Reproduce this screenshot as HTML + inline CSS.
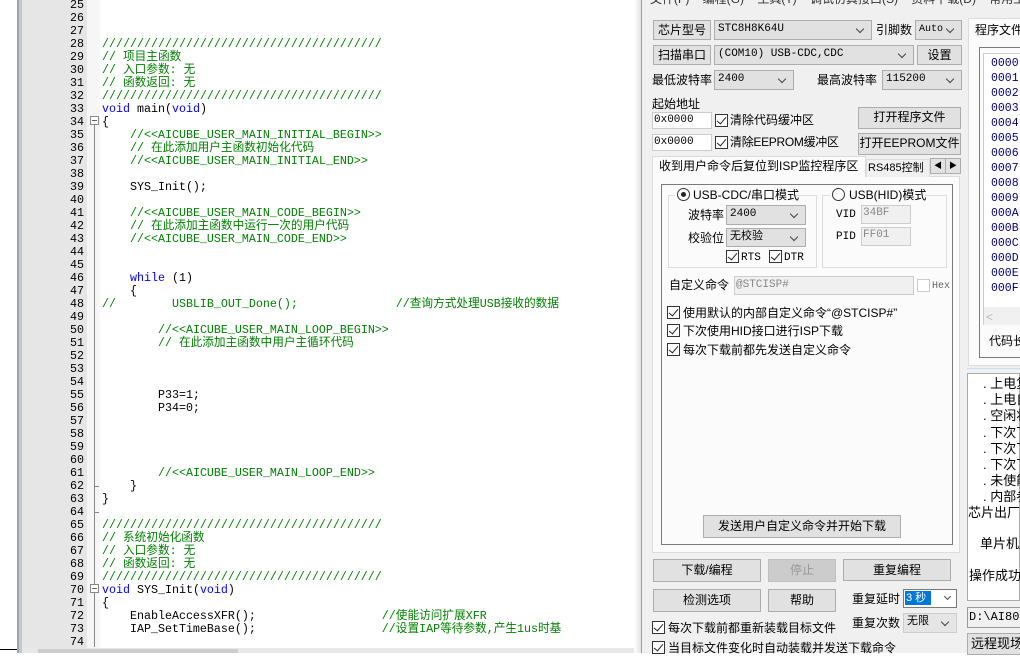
<!DOCTYPE html>
<html><head><meta charset="utf-8"><style>
*{margin:0;padding:0;box-sizing:border-box}
body{width:1020px;height:653px;overflow:hidden;background:#fff;position:relative;font-family:"Liberation Sans","Noto Sans CJK SC",sans-serif;font-size:12px;color:#000}
.a{position:absolute}
pre{font-family:"Liberation Mono","Noto Sans CJK SC",monospace;font-size:11.67px;line-height:13px;position:absolute;white-space:pre}
.c{color:#008000}.k{color:#0000ff}
.btn{position:absolute;background:#e1e1e1;border:1px solid #adadad;text-align:center;font-size:12px;line-height:19px;white-space:nowrap}
.cb{position:absolute;background:#e1e1e1;border:1px solid #adadad;font-size:11px;line-height:17px;padding-left:3px;font-family:"Liberation Mono","Noto Sans CJK SC",monospace}
.cb:after{content:"";position:absolute;right:8px;top:5px;width:5px;height:5px;border-right:1px solid #444;border-bottom:1px solid #444;transform:rotate(45deg)}
.in{position:absolute;background:#fff;border:1px solid #ccc;font-size:11px;line-height:15px;font-family:"Liberation Mono",monospace;padding-left:1px}
.ck{position:absolute;width:13px;height:13px;border:1px solid #333;background:#fff}
.ck:after{content:"";position:absolute;left:3px;top:0px;width:4px;height:8px;border-right:1.5px solid #222;border-bottom:1.5px solid #222;transform:rotate(40deg)}
.t{position:absolute;font-size:12px;white-space:nowrap;line-height:16px}
.m{font-family:"Liberation Mono","Noto Sans CJK SC",monospace;font-size:11px}
</style></head><body>
<div class="a" style="left:17px;top:0;width:2px;height:653px;background:#9aa6b8"></div>
<div class="a" style="left:19px;top:0;width:3px;height:653px;background:#c8c8c8"></div>
<div class="a" style="left:22px;top:0;width:65px;height:653px;background:#e6e6e6"></div>
<div class="a" style="left:87px;top:0;width:13px;height:653px;background:#f6f6f6"></div>
<div class="a" style="left:0;top:649px;width:17px;height:1px;background:#000"></div>
<div class="a" style="left:22px;top:648px;width:620px;height:5px;background:#e8e8e8"></div>
<div class="a" style="left:38px;top:649px;width:200px;height:4px;background:#cdcdcd"></div>
<pre style="left:40px;top:-1px;width:44px;text-align:right">25
26
27
28
29
30
31
32
33
34
35
36
37
38
39
40
41
42
43
44
45
46
47
48
49
50
51
52
53
54
55
56
57
58
59
60
61
62
63
64
65
66
67
68
69
70
71
72
73
74</pre>
<div class="a" style="left:90px;top:116px;width:9px;height:9px;border:1px solid #888;background:#fff"></div>
<div class="a" style="left:92px;top:120px;width:5px;height:1px;background:#666"></div>
<div class="a" style="left:94px;top:125px;width:1px;height:152px;background:#888"></div>
<div class="a" style="left:94px;top:277px;width:1px;height:370px;background:#888"></div>
<div class="a" style="left:94px;top:486px;width:5px;height:1px;background:#888"></div>
<div class="a" style="left:94px;top:512px;width:5px;height:1px;background:#888"></div>
<div class="a" style="left:90px;top:584px;width:9px;height:9px;border:1px solid #888;background:#fff"></div>
<div class="a" style="left:92px;top:588px;width:5px;height:1px;background:#666"></div>
<pre style="left:102px;top:-1px">



<span class="c">////////////////////////////////////////</span>
<span class="c">// 项目主函数</span>
<span class="c">// 入口参数: 无</span>
<span class="c">// 函数返回: 无</span>
<span class="c">////////////////////////////////////////</span>
<span class="k">void</span> main(<span class="k">void</span>)
{
    <span class="c">//&lt;&lt;AICUBE_USER_MAIN_INITIAL_BEGIN&gt;&gt;</span>
    <span class="c">// 在此添加用户主函数初始化代码</span>
    <span class="c">//&lt;&lt;AICUBE_USER_MAIN_INITIAL_END&gt;&gt;</span>

    SYS_Init();

    <span class="c">//&lt;&lt;AICUBE_USER_MAIN_CODE_BEGIN&gt;&gt;</span>
    <span class="c">// 在此添加主函数中运行一次的用户代码</span>
    <span class="c">//&lt;&lt;AICUBE_USER_MAIN_CODE_END&gt;&gt;</span>


    <span class="k">while</span> (1)
    {
<span class="c">//        USBLIB_OUT_Done();              //查询方式处理USB接收的数据</span>

        <span class="c">//&lt;&lt;AICUBE_USER_MAIN_LOOP_BEGIN&gt;&gt;</span>
        <span class="c">// 在此添加主函数中用户主循环代码</span>



        P33=1;
        P34=0;




        <span class="c">//&lt;&lt;AICUBE_USER_MAIN_LOOP_END&gt;&gt;</span>
    }
}

<span class="c">////////////////////////////////////////</span>
<span class="c">// 系统初始化函数</span>
<span class="c">// 入口参数: 无</span>
<span class="c">// 函数返回: 无</span>
<span class="c">////////////////////////////////////////</span>
<span class="k">void</span> SYS_Init(<span class="k">void</span>)
{
    EnableAccessXFR();                  <span class="c">//使能访问扩展XFR</span>
    IAP_SetTimeBase();                  <span class="c">//设置IAP等待参数,产生1us时基</span>
</pre>
<div class="a" style="left:634px;top:0;width:7px;height:653px;background:linear-gradient(90deg,#fff,#e4e4e4)"></div>
<div class="a" style="left:641px;top:0;width:1px;height:653px;background:#a0a0a0"></div>
<div class="a" style="left:642px;top:0;width:378px;height:653px;background:#f0f0f0"></div>
<div class="t" style="left:650px;top:-9px;color:#333">文件(F)&nbsp;&nbsp;&nbsp;&nbsp;编程(G)&nbsp;&nbsp;&nbsp;&nbsp;工具(T)&nbsp;&nbsp;&nbsp;&nbsp;调试仿真接口(S)&nbsp;&nbsp;&nbsp;&nbsp;资料下载(D)&nbsp;&nbsp;&nbsp;&nbsp;常用工</div>
<div class="btn" style="left:653px;top:20px;width:58px;height:20px">芯片型号</div>
<div class="cb" style="left:714px;top:20px;width:158px;height:20px">STC8H8K64U</div>
<div class="t" style="left:876px;top:22px">引脚数</div>
<div class="cb" style="left:915px;top:20px;width:47px;height:20px;font-size:10px">Auto</div>
<div class="btn" style="left:653px;top:45px;width:58px;height:20px">扫描串口</div>
<div class="cb" style="left:714px;top:45px;width:200px;height:20px">(COM10) USB-CDC,CDC</div>
<div class="btn" style="left:917px;top:45px;width:45px;height:20px">设置</div>
<div class="t" style="left:652px;top:72px">最低波特率</div>
<div class="cb" style="left:714px;top:70px;width:80px;height:20px">2400</div>
<div class="t" style="left:817px;top:72px">最高波特率</div>
<div class="cb" style="left:882px;top:70px;width:80px;height:20px">115200</div>
<div class="t" style="left:652px;top:96px">起始地址</div>
<div class="in" style="left:652px;top:112px;width:60px;height:17px">0x0000</div>
<div class="ck" style="left:715px;top:114px"></div>
<div class="t" style="left:730px;top:112px">清除代码缓冲区</div>
<div class="in" style="left:652px;top:134px;width:60px;height:17px">0x0000</div>
<div class="ck" style="left:715px;top:136px"></div>
<div class="t" style="left:730px;top:134px;letter-spacing:-0.3px">清除EEPROM缓冲区</div>
<div class="btn" style="left:858px;top:107px;width:103px;height:22px">打开程序文件</div>
<div class="btn" style="left:858px;top:133px;width:103px;height:22px">打开EEPROM文件</div>
<div class="a" style="left:652px;top:176px;width:308px;height:377px;background:#fbfbfb;border:1px solid #dcdcdc"></div>
<div class="a" style="left:652px;top:156px;width:214px;height:21px;background:#fbfbfb;border:1px solid #dcdcdc;border-bottom:none"></div>
<div class="t" style="left:659px;top:158px">收到用户命令后复位到ISP监控程序区</div>
<div class="a" style="left:866px;top:159px;width:64px;height:18px;background:#f0f0f0;border:1px solid #dcdcdc;border-bottom:none"></div>
<div class="t" style="left:868px;top:160px;font-size:11px">RS485控制</div>
<div class="btn" style="left:930px;top:158px;width:16px;height:16px;font-size:8px;line-height:14px">◀</div>
<div class="btn" style="left:945px;top:158px;width:16px;height:16px;font-size:8px;line-height:14px">▶</div>
<div class="a" style="left:661px;top:184px;width:292px;height:361px;border:1px solid #7a7a7a"></div>
<div class="a" style="left:668px;top:195px;width:149px;height:73px;border:1px solid #dcdcdc"></div>
<div class="a" style="left:822px;top:195px;width:125px;height:73px;border:1px solid #dcdcdc"></div>
<div class="a" style="left:675px;top:187px;width:118px;height:16px;background:#fbfbfb"></div>
<div class="a" style="left:677px;top:188px;width:13px;height:13px;border:1px solid #333;border-radius:50%;background:#fff"></div>
<div class="a" style="left:681px;top:192px;width:5px;height:5px;border-radius:50%;background:#222"></div>
<div class="t" style="left:693px;top:187px">USB-CDC/串口模式</div>
<div class="a" style="left:830px;top:187px;width:95px;height:16px;background:#fbfbfb"></div>
<div class="a" style="left:832px;top:188px;width:13px;height:13px;border:1px solid #333;border-radius:50%;background:#fff"></div>
<div class="t" style="left:849px;top:187px">USB(HID)模式</div>
<div class="t" style="left:688px;top:207px">波特率</div>
<div class="cb" style="left:726px;top:205px;width:80px;height:20px">2400</div>
<div class="t" style="left:688px;top:230px">校验位</div>
<div class="cb" style="left:726px;top:228px;width:80px;height:19px">无校验</div>
<div class="ck" style="left:726px;top:250px"></div><div class="t m" style="left:741px;top:250px">RTS</div>
<div class="ck" style="left:769px;top:250px"></div><div class="t m" style="left:784px;top:250px">DTR</div>
<div class="t m" style="left:836px;top:207px">VID</div>
<div class="in" style="left:861px;top:205px;width:50px;height:19px;color:#888;background:#f0f0f0">34BF</div>
<div class="t m" style="left:836px;top:229px">PID</div>
<div class="in" style="left:861px;top:227px;width:50px;height:19px;color:#888;background:#f0f0f0">FF01</div>
<div class="t" style="left:669px;top:277px">自定义命令</div>
<div class="in" style="left:734px;top:276px;width:180px;height:19px;color:#888;background:#f0f0f0;line-height:17px">@STCISP#</div>
<div class="a" style="left:917px;top:279px;width:13px;height:13px;border:1px solid #ccc;background:#fff"></div>
<div class="t m" style="left:932px;top:279px;font-size:10px;color:#666">Hex</div>
<div class="ck" style="left:667px;top:306px"></div><div class="t" style="left:683px;top:305px">使用默认的内部自定义命令“@STCISP#”</div>
<div class="ck" style="left:667px;top:324px"></div><div class="t" style="left:683px;top:323px">下次使用HID接口进行ISP下载</div>
<div class="ck" style="left:667px;top:343px"></div><div class="t" style="left:683px;top:342px">每次下载前都先发送自定义命令</div>
<div class="btn" style="left:703px;top:515px;width:198px;height:23px;line-height:21px">发送用户自定义命令并开始下载</div>
<div class="btn" style="left:653px;top:559px;width:108px;height:23px;line-height:21px">下载/编程</div>
<div class="btn" style="left:768px;top:559px;width:68px;height:23px;line-height:21px;background:#cccccc;border-color:#bfbfbf;color:#999">停止</div>
<div class="btn" style="left:843px;top:559px;width:108px;height:22px;line-height:20px">重复编程</div>
<div class="btn" style="left:653px;top:589px;width:108px;height:23px;line-height:21px">检测选项</div>
<div class="btn" style="left:768px;top:589px;width:68px;height:23px;line-height:21px">帮助</div>
<div class="t" style="left:852px;top:591px">重复延时</div>
<div class="a" style="left:903px;top:589px;width:54px;height:19px;background:#fff;border:1px solid #7a7a7a"></div>
<div class="a" style="left:905px;top:591px;width:26px;height:14px;background:#0078d7"></div>
<div class="t" style="left:906px;top:590px;color:#fff;font-size:11px">3 秒</div>
<div class="a" style="left:945px;top:594px;width:5px;height:5px;border-right:1px solid #444;border-bottom:1px solid #444;transform:rotate(45deg)"></div>
<div class="t" style="left:852px;top:615px">重复次数</div>
<div class="cb" style="left:903px;top:613px;width:54px;height:20px;background:#e5e5e5;border-color:#ccc">无限</div>
<div class="ck" style="left:652px;top:621px"></div><div class="t" style="left:668px;top:620px">每次下载前都重新装载目标文件</div>
<div class="ck" style="left:652px;top:641px"></div><div class="t" style="left:668px;top:640px">当目标文件变化时自动装载并发送下载命令</div>
<div class="a" style="left:968px;top:40px;width:60px;height:326px;background:#fbfbfb;border:1px solid #dcdcdc"></div>
<div class="a" style="left:968px;top:18px;width:60px;height:23px;background:#fbfbfb;border:1px solid #dcdcdc;border-bottom:none"></div>
<div class="t" style="left:975px;top:22px">程序文件</div>
<div class="a" style="left:979px;top:47px;width:50px;height:311px;border:1px solid #7a7a7a"></div>
<div class="a" style="left:983px;top:53px;width:40px;height:272px;background:#fff;border:1px solid #ccc"></div>
<div class="a" style="left:984px;top:307px;width:40px;height:18px;background:#f0f0f0"></div>
<div class="t" style="left:986px;top:309px;color:#bbb">&lt;</div>
<pre style="left:991px;top:56px;line-height:15px;font-size:11.5px;color:#000080">0000
0001
0002
0003
0004
0005
0006
0007
0008
0009
000A
000B
000C
000D
000E
000F</pre>
<div class="t" style="left:989px;top:333px">代码长</div>
<div class="a" style="left:967px;top:368px;width:53px;height:1px;background:#c8dcf0"></div>
<div class="a" style="left:967px;top:373px;width:53px;height:228px;background:#fff;border:1px solid #aaa"></div>
<pre style="left:983px;top:376px;font-family:'Liberation Sans','Noto Sans CJK SC',sans-serif;font-size:13px;line-height:16.2px">. 上电复
. 上电自
. 空闲状
. 下次下
. 下次下
. 下次下
. 未使能
. 内部参</pre>
<div class="t" style="left:968px;top:505px;font-size:13px">芯片出厂</div>
<div class="t" style="left:980px;top:536px;font-size:13px">单片机型</div>
<div class="t" style="left:969px;top:568px;font-size:13px">操作成功</div>
<div class="in" style="left:967px;top:607px;width:60px;height:21px;background:#f0f0f0;border-color:#999;font-size:12px;line-height:19px">D:\AI805</div>
<div class="btn" style="left:967px;top:633px;width:60px;height:22px;font-size:13px">远程现场</div>
</body></html>
